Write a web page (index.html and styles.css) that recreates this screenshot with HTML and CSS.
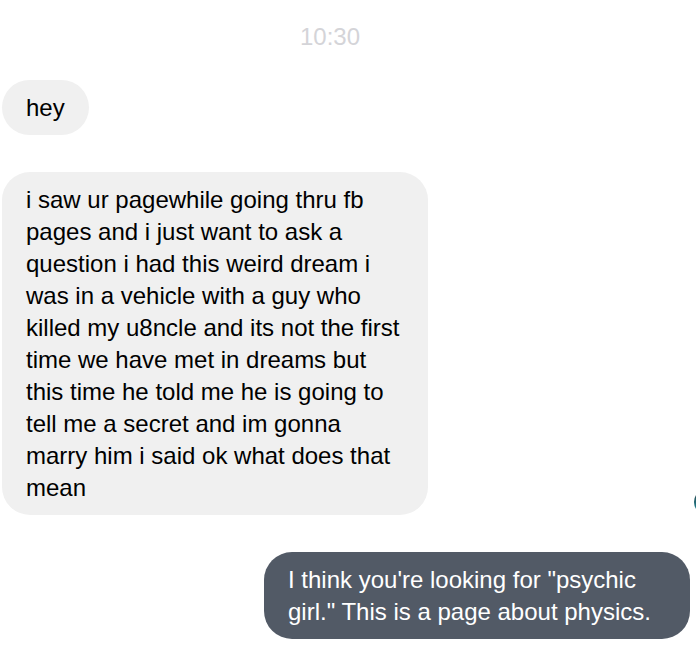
FILE: index.html
```html
<!DOCTYPE html>
<html lang="en">
<head>
<meta charset="utf-8">
<title>Chat</title>
<link rel="stylesheet" href="styles.css">
</head>
<body>
<main class="chat">
  <div class="time">10:30</div>
  <div class="row row-in">
    <div class="bubble bubble-in">hey</div>
  </div>
  <div class="row row-in row-gap">
    <div class="bubble bubble-in">i saw ur pagewhile going thru fb pages and i just want to ask a question i had this weird dream i was in a vehicle with a guy who killed my u8ncle and its not the first time we have met in dreams but this time he told me he is going to tell me a secret and im gonna marry him i said ok what does that mean</div>
    <span class="seen"></span>
  </div>
  <div class="row row-out row-gap">
    <div class="bubble bubble-out">I think you're looking for "psychic girl." This is a page about physics.</div>
  </div>
</main>
</body>
</html>
```
FILE: styles.css
```css
html, body {
  margin: 0;
  padding: 0;
  background: #ffffff;
  overflow: hidden;
}

body {
  font-family: "Liberation Sans", Arial, Helvetica, sans-serif;
  width: 696px;
  height: 648px;
}

.chat {
  display: flex;
  flex-direction: column;
  padding: 21px 6px 0 2px;
}

.time {
  font-size: 24px;
  line-height: 32px;
  color: #d4d4d8;
  text-align: center;
  padding-right: 32px;
  margin-bottom: 27px;
}

.row {
  display: flex;
  position: relative;
}

.row-in {
  justify-content: flex-start;
}

.row-out {
  justify-content: flex-end;
}

.row-gap {
  margin-top: 37px;
}

.bubble {
  font-size: 24px;
  line-height: 32px;
  max-width: 378px;
  padding: 12px 24px 11px 24px;
  border-radius: 28px;
}

.bubble-in {
  background: #f0f0f0;
  color: #000000;
}

.bubble-out {
  background: #525a66;
  color: #ffffff;
}

.seen {
  position: absolute;
  right: -30px;
  bottom: 0;
  width: 26px;
  height: 26px;
  border-radius: 50%;
  background: linear-gradient(180deg, #2c3a3e 0%, #1f6f7c 60%, #2a9db0 100%);
}
```
